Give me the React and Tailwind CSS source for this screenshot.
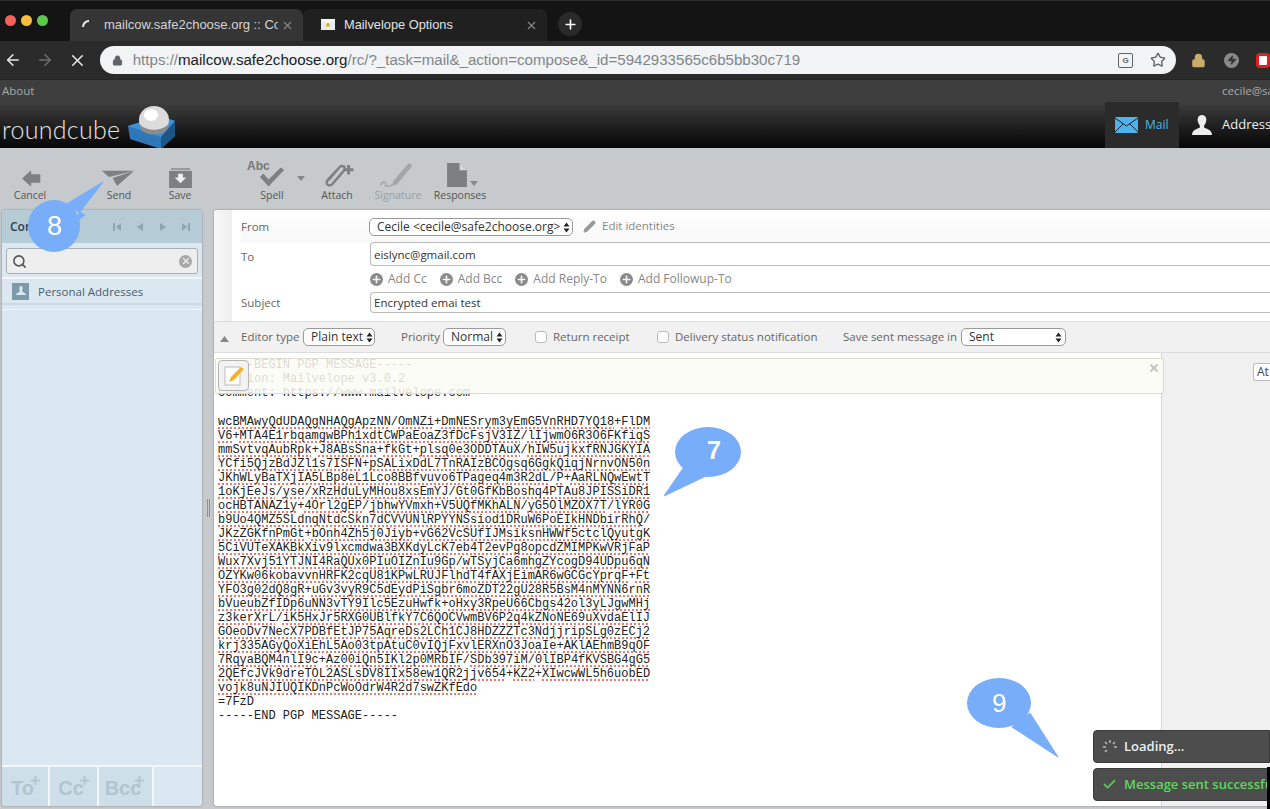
import React from "react";
import { ArrowLeft, ArrowRight, X, Lock, Plus, Star, Search, Pencil, Check, Zap } from "lucide-react";

const labelFont = "font-['Open_Sans','Noto_Sans',sans-serif]";

const pgpHead = [
  "-----BEGIN PGP MESSAGE-----",
  "Version: Mailvelope v3.0.2",
  "Comment: https://www.mailvelope.com",
  "",
];

const pgpBody = [
  "wcBMAwyQdUDAQgNHAQgApzNN/OmNZi+DmNESrym3yEmG5VnRHD7YQ18+FlDM",
  "V6+MTA4E1rbqamgwBPh1xdtCWPaEoaZ3fDcFsjV3IZ/lIjwmO6R3O6FKfiqS",
  "mmSvtvqAubRpk+J8ABsSna+fkGt+plsq0e3ODDTAuX/hIW5ujkxfRNJGKYIA",
  "YCfi5QjzBdJZl1s7ISFN+pSALixDdL7TnRAIzBCOgsq6GgkQiqjNrnvON50n",
  "JKhWLyBaTXjIA5LBp8eL1Lco8BBfvuvo6TPageq4m3R2dL/P+AaRLNQwEwtT",
  "1oKjEeJs/yse/xRzHduLyMHou8xsEmYJ/Gt0GfKbBoshq4PTAu8JPISSiDR1",
  "ocHBTANAZ1y+4Orl2gEP/jbhwYVmxh+V5UQfMKhALN/yG5OlMZOX7T/lYR0G",
  "b9Uo4QMZ5SLdnqNtdcSkn7dCVVUNlRPYYNSsiod1DRuW6PoEIkHNDbirRhQ/",
  "JKzZGKfnPmGt+bOnh4Zh5j0Jiyb+vG62VcSUfIJMsiksnHWWf5ctclQyutgK",
  "5CiVUTeXAKBkXiv9lxcmdwa3BXKdyLcK7eb4T2evPg8opcdZMIMPKwVRjFaP",
  "Wux7Xvj51YTJNI4RaQUx0PIuOIZnIu9Gp/wTSyjCa6mhgZYcogD94UDpu6qN",
  "OZYKw06kobavvnHRFK2cqU81KPwLRUJFlhdT4fAXjEimAR6wGCGcYprqF+Ft",
  "YFO3g02dQ8gR+uGv3vyR9C5dEydPiSgbr6moZDT22gU28R5BsM4nMYNN6rnR",
  "bVueubZfIDp6uNN3vTY9Ilc5EzuHwfk+oHxy3RpeU66Cbgs42ol3yLJgwMHj",
  "z3kerXrL/iK5HxJr5RXG0UBlfkY7C6QOCVwmBV6P2q4kZNoNE69uXvdaElIJ",
  "GOeoDv7NecX7PDBfEtJP75AqreDs2LCh1CJ8HDZZZTc3NdjjripSLg0zECj2",
  "krj335AGyQoXiEhL5Ao03tpAtuC0vIQjFxvlERXnO3JoaIe+AKlAEhmB9qOF",
  "7RqyaBQM4nlI9c+Az00iQn5IKl2p0MRbIF/SDb397iM/0lIBP4fKVSBG4gG5",
  "2QEfcJVk9dreTOL2ASLsDV8IIx58ew1QR2jjv654+KZ2+XIwcwWL5h6uobED",
  "vojk8uNJIUQIKDnPcWoOdrW4R2d7swZKfEdo",
];

const SpellLine = ({ text }) => (
  <div className="h-[14px] whitespace-pre">
    {text.split(/([+/])/).map((part, i) =>
      part === "+" || part === "/" ? (
        <span key={i}>{part}</span>
      ) : (
        <span key={i} className="underline decoration-dotted decoration-[#f2786f] decoration-2 underline-offset-2">
          {part}
        </span>
      )
    )}
  </div>
);

const ToolButton = ({ label, className, children, disabled }) => (
  <div className={`w-[60px] h-[60px] flex flex-col items-center shrink-0 ${className || ""}`}>
    <div className={`h-[40px] w-full flex items-end justify-center ${disabled ? "opacity-40" : ""}`}>{children}</div>
    <div className={`text-[10.5px] leading-[14px] ${disabled ? "text-[#9aa0a4]" : "text-[#555]"}`}>{label}</div>
  </div>
);

const SelectBox = ({ children, className }) => (
  <div className={`h-[18px] flex items-center justify-between bg-white border border-[#9a9a9a] rounded-[5px] text-[12px] text-[#333] pl-[7px] pr-[3px] shrink-0 ${className || ""}`}>
    <span className="whitespace-nowrap">{children}</span>
    <svg width="7" height="11" viewBox="0 0 7 11" className="shrink-0 ml-[3px]">
      <path d="M3.5 0.5 L6.5 4.5 H0.5 Z M0.5 6.5 H6.5 L3.5 10.5 Z" fill="#222" />
    </svg>
  </div>
);

const AddLink = ({ children, className }) => (
  <div className={`flex items-center gap-[5px] text-[12px] text-[#888] ${className || ""}`}>
    <span className="w-[13px] h-[13px] rounded-full bg-[#8a8a8a] flex items-center justify-center">
      <Plus size={11} strokeWidth={3.5} color="#f4f4f4" />
    </span>
    {children}
  </div>
);

const Checkbox = () => <span className="block w-[12px] h-[12px] bg-white border border-[#bbb] rounded-[3px] shrink-0" />;

const PagerIcon = ({ d }) => (
  <svg width="10" height="10" viewBox="0 0 10 10">
    <path d={d} fill="#92a4ae" />
  </svg>
);

const FooterButton = ({ label, className }) => (
  <div className={`relative h-full bg-[#cde0ea] border-r-2 border-[#f2f7fa] flex items-center justify-center ${className}`}>
    <span className="mt-[3px] mr-[5px] text-[20px] font-bold text-[#b3c5cf] font-['Liberation_Sans',sans-serif]">{label}</span>
    <Plus size={13} strokeWidth={3.5} color="#b3c5cf" className="absolute right-[6px] top-[7px]" />
  </div>
);

export default function App() {
  return (
    <div className={`relative w-[1270px] h-[809px] overflow-hidden flex flex-col bg-[#c6cacd] ${labelFont}`}>
      {/* tab strip */}
      <div className="h-[41px] bg-[#141414] border-t border-[#2a2a2a] flex items-end shrink-0 font-['Liberation_Sans',sans-serif]">
        <div className="w-[70px] h-[40px] flex items-center gap-[5px] pl-[5px] pb-[1px]">
          <span className="w-[11px] h-[11px] rounded-full bg-[#f4605a]" />
          <span className="w-[11px] h-[11px] rounded-full bg-[#f8bd3b]" />
          <span className="w-[11px] h-[11px] rounded-full bg-[#5dc94c]" />
        </div>
        <div className="w-[233px] h-[32px] bg-[#353535] rounded-t-[7px] flex items-center pl-[11px] pr-[9px]">
          <svg width="12" height="12" viewBox="0 0 12 12" className="shrink-0 mb-[3px]">
            <path d="M2 9 A6 6 0 0 1 8 3" fill="none" stroke="#eee" strokeWidth="2" />
          </svg>
          <span className="ml-[11px] w-[174px] overflow-hidden whitespace-nowrap text-[13px] text-[#d4d4d4]">mailcow.safe2choose.org :: Compose</span>
          <X size={13} color="#8a8a8a" className="ml-auto" />
        </div>
        <div className="w-[244px] h-[32px] bg-[#202020] rounded-t-[7px] flex items-center pl-[18px] pr-[9px]">
          <svg width="14" height="11" viewBox="0 0 14 11" className="shrink-0 mb-[2px]">
            <rect width="14" height="11" fill="#e8ecef" />
            <path d="M0 0 L7 6 L14 0 Z" fill="#f7f7f2" />
            <circle cx="7" cy="6" r="2" fill="#d8b23a" />
          </svg>
          <span className="ml-[9px] text-[12.8px] text-[#e2e2e2]">Mailvelope Options</span>
          <X size={13} color="#8a8a8a" className="ml-auto" />
        </div>
        <div className="ml-[11px] mb-[5px] w-[24px] h-[24px] rounded-full bg-[#2a2a2a] flex items-center justify-center">
          <Plus size={15} strokeWidth={2.5} color="#fff" />
        </div>
      </div>

      {/* url bar */}
      <div className="h-[38px] bg-[#2b2b2b] flex items-center shrink-0 font-['Liberation_Sans',sans-serif]">
        <ArrowLeft size={18} color="#e8e8e8" className="ml-[4px]" />
        <ArrowRight size={18} color="#6f6f6f" className="ml-[14px]" />
        <X size={19} color="#e8e8e8" className="ml-[14px]" />
        <div className="ml-[13px] w-[1082px] h-[28px] bg-[#f1f3f4] rounded-full flex items-center pl-[12px] pr-[10px]">
          <Lock size={11} color="#5f6368" fill="#5f6368" />
          <div className="ml-[10px] text-[15.1px] text-[#80868b] whitespace-nowrap">
            https://<span className="text-[#202124]">mailcow.safe2choose.org</span>/rc/?_task=mail&amp;_action=compose&amp;_id=5942933565c6b5bb30c719
          </div>
          <div className="ml-auto w-[15px] h-[15px] border border-[#5f6368] rounded-[2px] text-[8px] leading-[13px] text-center text-[#5f6368] font-bold">G</div>
          <Star size={16} color="#5f6368" strokeWidth={2} className="ml-[17px]" />
        </div>
        <Lock size={15} color="#c9ab6a" fill="#c9ab6a" className="ml-[15px]" />
        <span className="ml-[18px] w-[15px] h-[15px] rounded-full bg-[#8a8a8a] flex items-center justify-center">
          <Zap size={10} color="#333" fill="#333" />
        </span>
        <span className="ml-[17px] w-[14px] h-[15px] rounded-[4px] border-[3px] border-[#e02020] bg-white shrink-0" />
      </div>

      {/* top line */}
      <div className="h-[23px] bg-[#3e3e3e] border-t border-[#242424] flex items-center justify-between shrink-0 text-[11.5px] text-[#a9a9a9] pl-[2px]">
        <span>About</span>
        <span className="w-[48px] overflow-hidden whitespace-nowrap">cecile@safe2choose.org</span>
      </div>

      {/* header */}
      <div className="h-[46px] bg-gradient-to-b from-[#3f3f3f] to-[#070707] flex shrink-0">
        <div className="flex items-end pl-[2px] pb-[2px]">
          <span className="w-[120px] text-[25px] leading-[34px] font-light tracking-[0.3px] text-[#e4e4e4] font-['Lato',sans-serif]">roundcube</span>
          <svg width="50" height="48" viewBox="0 0 50 48" className="ml-[5px] mb-[-6px]">
            <path d="M1 22 L33 12 L48 17 L48 32 L34 45 L3 35 Z" fill="#2f78b8" />
            <path d="M1 22 L34 33 L48 17 L33 12 Z" fill="#3d92d6" />
            <path d="M34 33 L34 45 L48 32 L48 17 Z" fill="#1d5587" />
            <ellipse cx="27" cy="16" rx="15" ry="14" fill="#dcdcdc" />
            <ellipse cx="24" cy="11" rx="7" ry="6" fill="#fff" />
            <path d="M12 19 C17 28 37 28 42 19 L40 26 C34 32 20 32 14 26 Z" fill="#8c8c8c" />
          </svg>
        </div>
        <div className="ml-auto w-[74px] bg-[#2b2b2b] flex items-center pl-[10px]">
          <svg width="23" height="16" viewBox="0 0 23 16">
            <rect width="23" height="16" rx="1" fill="#4db3ea" />
            <path d="M0 1 L11.5 9 L23 1 M0 15 L8 7 M23 15 L15 7" fill="none" stroke="#123" strokeWidth="1" />
          </svg>
          <span className="ml-[7px] text-[12px] text-[#4fb6ea]">Mail</span>
        </div>
        <div className="w-[91px] flex items-center pl-[13px] overflow-hidden">
          <svg width="20" height="20" viewBox="0 0 20 20" className="shrink-0">
            <path d="M10 0 C14 0 15 4 14 7 C13 10 12 10 12 12 C13 14 20 14 20 20 H0 C0 14 7 14 8 12 C8 10 7 10 6 7 C5 4 6 0 10 0 Z" fill="#eee" />
          </svg>
          <span className="ml-[10px] text-[13px] text-[#eee] whitespace-nowrap">Addressbook</span>
        </div>
      </div>

      {/* toolbar */}
      <div className="h-[60px] bg-[#c6cacd] flex shrink-0">
        <ToolButton label="Cancel">
          <svg width="20" height="17" viewBox="0 0 24 20" className="mb-[1px] ml-[4px]">
            <path d="M11 0 L11 5 H22 V15 H11 V20 L0 10 Z" fill="#7d8083" />
          </svg>
        </ToolButton>
        <ToolButton label="Send" className="ml-[29px]">
          <svg width="36" height="18" viewBox="0 0 36 20" className="mb-[1px] ml-[-2px]">
            <path d="M0 2 L36 2 L8 9 Z M36 2 L12 10 L17 19 Z" fill="#7d8083" />
          </svg>
        </ToolButton>
        <ToolButton label="Save" className="ml-[1px]">
          <svg width="23" height="20" viewBox="0 0 24 21">
            <path d="M2 0 H22 V2 H2 Z" fill="#96999c" />
            <path d="M0 3 H24 V21 H0 Z" fill="#7d8083" />
            <path d="M9.5 6 H14.5 V10 H18 L12 16 L6 10 H9.5 Z" fill="#eee" />
          </svg>
        </ToolButton>
        <ToolButton label="Spell" className="ml-[32px]">
          <div className="relative w-[40px] h-[28px]">
            <span className="absolute left-[-5px] top-[-3px] text-[12px] font-bold text-[#777] font-['Liberation_Sans',sans-serif]">Abc</span>
            <svg width="26" height="20" viewBox="0 0 30 22" className="absolute left-[7px] top-[7px]">
              <path d="M1 11 L5 7 L11 14 L25 0 L29 3 L11 22 Z" fill="#7d8083" />
            </svg>
            <svg width="8" height="5" viewBox="0 0 8 5" className="absolute left-[45px] top-[16px]">
              <path d="M0 0 H8 L4 5 Z" fill="#85888a" />
            </svg>
          </div>
        </ToolButton>
        <ToolButton label="Attach" className="ml-[5px]">
          <svg width="38" height="25" viewBox="0 0 36 26" className="ml-[4px]">
            <path d="M7 18 L18 5 C21 1 26 4 23 8 L11 22 C8 25 3 22 6 18 L16 7" fill="none" stroke="#7d8083" strokeWidth="2.5" />
            <path d="M28 2 V12 M23 7 H33" stroke="#7d8083" strokeWidth="3" />
          </svg>
        </ToolButton>
        <ToolButton label="Signature" className="ml-[1px]" disabled>
          <svg width="42" height="27" viewBox="0 0 38 28">
            <path d="M14 21 L30 2 L34 5 L18 24 L13 26 Z" fill="#6f7376" />
            <path d="M1 25 C3 20 8 21 6 25 C5 27 10 26 13 25" fill="none" stroke="#6f7376" strokeWidth="1.5" />
          </svg>
        </ToolButton>
        <ToolButton label="Responses" className="ml-[2px]">
          <div className="relative w-[30px] h-[25px]">
            <svg width="20" height="24" viewBox="0 0 19 23" className="absolute left-[2px] top-0">
              <path d="M0 0 H12 L19 7 V23 H0 Z" fill="#7d8083" />
              <path d="M12 0 V7 H19 Z" fill="#d5d8da" />
            </svg>
            <svg width="8" height="5" viewBox="0 0 8 5" className="absolute left-[25px] top-[18px]">
              <path d="M0 0 H8 L4 5 Z" fill="#85888a" />
            </svg>
          </div>
        </ToolButton>
      </div>

      {/* main area */}
      <div className="flex flex-1 min-h-0 pl-[2px] pt-[2px] pb-[3px]">
        {/* contacts sidebar */}
        <div className="relative w-[200px] bg-[#dbe8f1] rounded-[3px] shadow-[0_0_2px_rgba(0,0,0,0.4)] flex flex-col shrink-0 overflow-hidden">
          <div className="h-[33px] bg-[#b5cbd6] flex items-center pl-[8px] pr-[11px] shrink-0">
            <span className="text-[12px] font-semibold text-[#2f3f49]">Contacts</span>
            <div className="ml-auto flex items-center gap-[13px]">
              <PagerIcon d="M1 1 H3 V9 H1 Z M9 1 V9 L4 5 Z" />
              <PagerIcon d="M8 1 V9 L2 5 Z" />
              <PagerIcon d="M2 1 V9 L8 5 Z" />
              <PagerIcon d="M1 1 V9 L6 5 Z M7 1 H9 V9 H7 Z" />
            </div>
          </div>
          <div className="h-[36px] px-[4px] pt-[5px] border-b-2 border-[#f2f7fa] shrink-0">
            <div className="h-[26px] bg-[#eeeeee] border border-[#a8b0b4] rounded-[3px] flex items-center px-[5px] justify-between">
              <Search size={15} strokeWidth={2.5} color="#555" />
              <span className="w-[13px] h-[13px] rounded-full bg-[#a8a8a8] flex items-center justify-center">
                <X size={10} strokeWidth={3} color="#eee" />
              </span>
            </div>
          </div>
          <div className="h-[26px] flex items-center pl-[10px] border-b-2 border-[#c8dbe6] shrink-0">
            <div className="w-[17px] h-[17px] bg-[#7d9aa8] flex items-center justify-center">
              <svg width="10" height="10" viewBox="0 0 10 10">
                <path d="M5 0 C7 0 7 3 6 5 C6 6 10 7 10 9 H0 C0 7 4 6 4 5 C3 3 3 0 5 0 Z" fill="#dbe8f1" />
              </svg>
            </div>
            <span className="ml-[9px] mt-[1px] text-[11.5px] text-[#4a5d69]">Personal Addresses</span>
          </div>
          <div className="mt-[4px] h-[1px] bg-[#f2f7fa] shrink-0" />
          <div className="mt-auto h-[41px] border-t-2 border-[#f2f7fa] flex shrink-0">
            <FooterButton label="To" className="w-[48px]" />
            <FooterButton label="Cc" className="w-[49px]" />
            <FooterButton label="Bcc" className="w-[55px]" />
          </div>
        </div>

        {/* splitter */}
        <div className="w-[12px] flex items-center justify-center gap-[1px] shrink-0">
          <span className="w-[1px] h-[18px] bg-[#8e9396]" />
          <span className="w-[1px] h-[18px] bg-[#8e9396]" />
        </div>

        {/* compose panel */}
        <div className="relative flex-1 min-w-0 bg-white rounded-l-[3px] shadow-[0_0_2px_rgba(0,0,0,0.4)] flex flex-col overflow-hidden">
          <div className="flex h-[111px] shrink-0">
            <div className="w-[18px] bg-gradient-to-r from-[#f8f8f8] to-[#eeeeee]" />
            <div className="flex-1 min-w-0 pl-[9px] text-[11.5px] text-[#666] flex flex-col">
              <div className="h-[32px] flex items-center bg-gradient-to-b from-white to-[#f8f8f8]">
                <span className="w-[128px] shrink-0 mt-[2px]">From</span>
                <SelectBox className="w-[204px] mt-[2px]">Cecile &lt;cecile@safe2choose.org&gt;</SelectBox>
                <Pencil size={13} color="#999" fill="#999" className="ml-[10px]" />
                <span className="ml-[6px] text-[#888]">Edit identities</span>
              </div>
              <div className="h-[24px] flex items-center">
                <span className="w-[129px] shrink-0 mt-[6px]">To</span>
                <input readOnly defaultValue="eislync@gmail.com" className="flex-1 min-w-0 h-full px-[3px] text-[11.5px] text-[#333] bg-white border border-r-0 border-[#bbb] rounded-l-[4px] outline-none" />
              </div>
              <div className="h-[26px] flex items-center pl-[129px]">
                <AddLink>Add Cc</AddLink>
                <AddLink className="ml-[13px]">Add Bcc</AddLink>
                <AddLink className="ml-[13px]">Add Reply-To</AddLink>
                <AddLink className="ml-[13px]">Add Followup-To</AddLink>
              </div>
              <div className="h-[21px] flex items-center">
                <span className="w-[129px] shrink-0">Subject</span>
                <input readOnly defaultValue="Encrypted emai test" className="flex-1 min-w-0 h-full px-[3px] text-[11.5px] text-[#333] bg-white border border-r-0 border-[#bbb] rounded-l-[4px] outline-none" />
              </div>
            </div>
          </div>

          {/* options */}
          <div className="h-[32px] bg-[#f1f1f1] border-t border-b border-[#dcdcdc] flex items-center shrink-0 text-[11.5px] text-[#666]">
            <svg width="9" height="6" viewBox="0 0 9 6" className="ml-[6px] mt-[3px]">
              <path d="M0 6 L4.5 0 L9 6 Z" fill="#888" />
            </svg>
            <span className="ml-[12px] w-[58px] whitespace-nowrap">Editor type</span>
            <SelectBox className="ml-[4px] w-[72px]">Plain text</SelectBox>
            <span className="ml-[26px] w-[38px]">Priority</span>
            <SelectBox className="ml-[4px] w-[63px]">Normal</SelectBox>
            <span className="ml-[29px]"><Checkbox /></span>
            <span className="ml-[6px] w-[76px] whitespace-nowrap">Return receipt</span>
            <span className="ml-[28px]"><Checkbox /></span>
            <span className="ml-[6px] w-[142px] whitespace-nowrap">Delivery status notification</span>
            <span className="ml-[26px] w-[114px] whitespace-nowrap">Save sent message in</span>
            <SelectBox className="ml-[4px] w-[105px]">Sent</SelectBox>
          </div>

          {/* body */}
          <div className="relative flex flex-1 min-h-0">
            <div className="w-[948px] border-r border-[#d6d6d6] pl-[4px] pt-[5px] font-['Liberation_Mono',monospace] text-[12px] leading-[14px] text-[#222] shrink-0">
              {pgpHead.map((line, i) => (
                <div key={i} className="h-[14px] whitespace-pre">{line}</div>
              ))}
              <div className="h-[1px]" />
              {pgpBody.map((line, i) => (
                <SpellLine key={i} text={line} />
              ))}
              <div className="h-[14px]">=7FzD</div>
              <div className="h-[14px]">-----END PGP MESSAGE-----</div>
            </div>
            <div className="flex-1 bg-[#f0f0f0] flex justify-end pt-[10px]">
              <div className="w-[17px] h-[18px] bg-white border border-r-0 border-[#bbb] rounded-l-[3px] text-[12px] leading-[16px] pl-[3px] text-[#444] overflow-hidden">At</div>
            </div>

            {/* mailvelope bar */}
            <div className="absolute left-[1px] top-[5px] w-[949px] h-[36px] bg-[#fcfbf5]/85 border border-[#dedbd0] rounded-[2px]">
              <div className="absolute left-[2px] top-[1px] w-[31px] h-[31px] bg-[#f2f2f2] border border-[#b5b5b5] rounded-[4px] flex items-center justify-center">
                <svg width="20" height="20" viewBox="0 0 20 20">
                  <rect x="1" y="1" width="15" height="18" fill="#fff" stroke="#bbb" />
                  <path d="M5 16 L7 11 L17 1 L20 3 L10 14 Z" fill="#eeb32b" />
                </svg>
              </div>
              <X size={12} strokeWidth={4} color="#c4c4c4" className="absolute right-[3px] top-[3px]" />
            </div>
          </div>
        </div>
      </div>

      {/* notifications */}
      <div className="absolute left-[1093px] top-[730px] w-[177px] flex flex-col gap-[5px] text-[13px] font-semibold">
        <div className="h-[33px] bg-[#4d4d4d] border border-[#3a3a3a] rounded-l-[4px] flex items-center pl-[8px] text-[#eee]">
          <svg width="16" height="16" viewBox="0 0 16 16" stroke="#bbb" strokeWidth="1.5">
            <path d="M8 1 V4 M13 3 L11 5 M15 8 H12 M3 3 L5 5 M1 8 H4 M3 13 L5 11" />
          </svg>
          <span className="ml-[6px]">Loading...</span>
        </div>
        <div className="h-[33px] bg-[#4d4d4d] border border-[#3a3a3a] rounded-l-[4px] flex items-center pl-[8px] text-[#5fd85f] overflow-hidden">
          <Check size={15} strokeWidth={3} color="#58c558" className="shrink-0" />
          <span className="ml-[7px] whitespace-nowrap">Message sent successfully.</span>
        </div>
      </div>
      <div className="absolute left-[1267px] top-[767px] w-[3px] h-[42px] bg-black" />

      {/* annotation bubbles */}
      <div className="absolute left-[26px] top-[170px] w-[84px] h-[82px]">
        <svg width="84" height="82" viewBox="0 0 84 82" className="absolute inset-0">
          <circle cx="28" cy="56" r="26" fill="#78adf9" />
          <path d="M77 12 L39 35 L59 45 L40 60 Z" fill="#78adf9" stroke="#78adf9" strokeLinejoin="round" />
        </svg>
        <span className="absolute left-[21px] top-[38px] text-[27px] leading-[36px] font-['Liberation_Sans',sans-serif] text-white">8</span>
      </div>
      <div className="absolute left-[660px] top-[426px] w-[84px] h-[74px]">
        <svg width="84" height="74" viewBox="0 0 84 74" className="absolute inset-0">
          <ellipse cx="48" cy="26" rx="33" ry="25" fill="#78adf9" />
          <path d="M4 70 L26 38 L46 50 Z" fill="#78adf9" stroke="#78adf9" strokeLinejoin="round" />
        </svg>
        <span className="absolute left-[47px] top-[6px] text-[25px] leading-[36px] font-bold font-['Liberation_Sans',sans-serif] text-white">7</span>
      </div>
      <div className="absolute left-[966px] top-[677px] w-[96px] h-[84px]">
        <svg width="96" height="84" viewBox="0 0 96 84" className="absolute inset-0">
          <ellipse cx="33" cy="26" rx="32" ry="25" fill="#78adf9" />
          <path d="M92 80 L64 36 L46 50 Z" fill="#78adf9" stroke="#78adf9" strokeLinejoin="round" />
        </svg>
        <span className="absolute left-[26px] top-[8px] text-[26px] leading-[36px] font-['Liberation_Sans',sans-serif] text-white">9</span>
      </div>
    </div>
  );
}
